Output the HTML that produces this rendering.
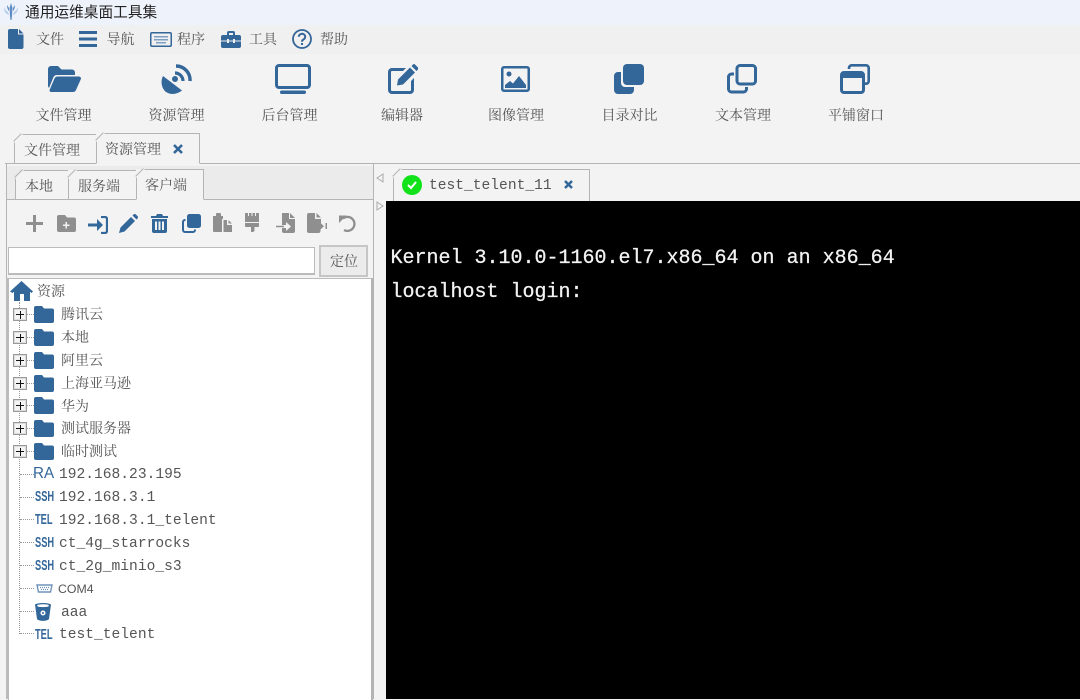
<!DOCTYPE html>
<html lang="zh"><head><meta charset="utf-8"><title>通用运维桌面工具集</title>
<style>
*{box-sizing:border-box}
html,body{margin:0;padding:0}
body{width:1080px;height:699px;overflow:hidden;position:relative;background:#f3f3f3;font-family:"Liberation Serif","Noto Serif CJK SC",serif;color:#555}
.a,.t,.m,svg{position:absolute}
.t{font-size:14px;line-height:20px;white-space:nowrap;font-family:"Noto Serif CJK SC","Liberation Serif",serif;color:#555}
.c{text-align:center;width:100px}
.m{font-family:"Liberation Mono",monospace;font-size:14.6px;line-height:20px;white-space:pre;color:#555}
svg{fill:#336699}
.tab{position:absolute;background:#f3f3f3;border:1px solid #b4b4b4}
.tab:before{content:"";position:absolute;left:-1px;top:-1px;width:9px;height:9px;background:var(--c,#f3f3f3);clip-path:polygon(0 0,100% 0,0 100%)}
.tab i{position:absolute;left:-3px;top:2px;width:11px;height:1px;background:#b4b4b4;transform:rotate(-45deg)}
.g{fill:#8f8f8f}
.dh{position:absolute;height:1px;border-top:1px dotted #999}
.dv{position:absolute;width:1px;border-left:1px dotted #999}
.pl{position:absolute;left:13px;width:14px;height:13px;border:1px solid #999;background:#f4f4f4;box-shadow:inset 0 0 0 1px #ddd}
.pl:before{content:"";position:absolute;left:2px;top:5px;width:8px;height:1px;background:#111}
.pl:after{content:"";position:absolute;left:5.500px;top:1.500px;width:1px;height:8px;background:#111}
.bl{font-family:"Liberation Sans",sans-serif;color:#336699;position:absolute;white-space:nowrap}
.sm{font:bold 15px/15px "Liberation Sans",sans-serif;transform:scaleX(.62);transform-origin:left}
.k{-webkit-text-stroke:.25px #f2f2f2}
</style></head><body>

<div class="a" style="left:0;top:0;width:1080px;height:25px;background:#eef3fb"></div>
<svg style="left:4px;top:3px" width="14" height="17" viewBox="0 0 14 17"><path fill="#b7cdea" d="M0 4c0 5 2 7 5 8l-1-3C2 8 1 6 0 4zM14 4c0 5-2 7-5 8l1-3c2-1 3-3 4-5z"/><path fill="#5f8cc4" d="M7 0l1.500 5L8 13l-.5 4h-1L6 13l-.5-8zM3 2c0 3 1 5 2 6V5zM11 2c0 3-1 5-2 6V5z"/></svg>
<div class="t" style="left:25px;top:2px;color:#222;font-family:'Noto Sans CJK SC',sans-serif;font-size:14.700px">通用运维桌面工具集</div>

<div class="a" style="left:0;top:25px;width:1080px;height:29px;background:#f0f0f0"></div>
<svg style="left:8px;top:29px" width="16" height="20" viewBox="0 0 16 20"><path d="M2 0h8v5.500h5.500V18a2 2 0 0 1-2 2H2a2 2 0 0 1-2-2V2a2 2 0 0 1 2-2zM11 0l4.500 4.500H11z"/></svg>
<div class="t" style="left:36px;top:29px">文件</div>
<svg style="left:79px;top:31px" width="18" height="16" viewBox="0 0 18 16"><path d="M0 0h18v3H0zM0 6.500h18v3H0zM0 13h18v3H0z"/></svg>
<div class="t" style="left:106.500px;top:29px">导航</div>
<svg style="left:150px;top:32px" width="22" height="15" viewBox="0 0 22 15"><path fill-rule="evenodd" d="M2 0h18a2 2 0 0 1 2 2v11a2 2 0 0 1-2 2H2a2 2 0 0 1-2-2V2a2 2 0 0 1 2-2zm0 1.500a.5.500 0 0 0-.5.500v11a.5.500 0 0 0 .5.500h18a.5.500 0 0 0 .5-.5V2a.5.500 0 0 0-.5-.5z"/><path fill="#7d9fc2" d="M4 4h14v1.500H4zM4 7h14v1.500H4zM6 10h10v1.500H6z"/></svg>
<div class="t" style="left:177px;top:29px">程序</div>
<svg style="left:221px;top:31px" width="20" height="17" viewBox="0 0 20 17"><path fill-rule="evenodd" d="M6 4V2a2 2 0 0 1 2-2h4a2 2 0 0 1 2 2v2h4a2 2 0 0 1 2 2v3.500h-6V8h-2v1.500H8V8H6v1.500H0V6a2 2 0 0 1 2-2zm2 0h4V2H8zM0 10.500h6V12h2v-1.500h4V12h2v-1.500h6V15a2 2 0 0 1-2 2H2a2 2 0 0 1-2-2z"/></svg>
<div class="t" style="left:249px;top:29px">工具</div>
<svg style="left:292px;top:29px" width="20" height="20" viewBox="0 0 20 20"><circle cx="10" cy="10" r="9" fill="none" stroke="#336699" stroke-width="1.800"/><path fill="none" stroke="#336699" stroke-width="2" d="M6.800 7.800a3.200 3 0 1 1 4.600 2.700c-1 .6-1.400 1-1.400 2.200"/><rect x="9" y="14" width="2" height="2"/></svg>
<div class="t" style="left:320px;top:29px">帮助</div>

<!-- big toolbar -->
<svg style="left:48px;top:66px" width="33" height="26" viewBox="0 0 33 26"><path d="M0 3a3 3 0 0 1 3-3h7l3.500 3.500H24a3 3 0 0 1 3 3V9H9a4 4 0 0 0-3.700 2.500L1 22a4 4 0 0 1-1-2z"/><path d="M9 10.500h22a2 2 0 0 1 1.800 2.800L28 24a3.500 3.500 0 0 1-3 2H3a1.500 1.500 0 0 1-1.300-2.200L6.500 12.500A3.500 3.500 0 0 1 9 10.500z"/></svg>
<div class="t c" style="left:13.500px;top:105px">文件管理</div>
<svg style="left:161px;top:64px" width="31" height="31" viewBox="0 0 31 31"><path d="M2 12c-3 6-1 13 3 16l1 .5c5 3 11 1 15-2z"/><circle cx="14" cy="15" r="3"/><path fill="none" stroke="#336699" stroke-width="3.200" d="M14 9a8 8 0 0 1 8 8"/><path fill="none" stroke="#336699" stroke-width="3.400" d="M15 2a14 14 0 0 1 14 15"/></svg>
<div class="t c" style="left:126.500px;top:105px">资源管理</div>
<svg style="left:275px;top:64px" width="36" height="30" viewBox="0 0 36 30"><path fill-rule="evenodd" d="M4 0h28a4 4 0 0 1 4 4v17a4 4 0 0 1-4 4H4a4 4 0 0 1-4-4V4a4 4 0 0 1 4-4zm0 3a1 1 0 0 0-1 1v17a1 1 0 0 0 1 1h28a1 1 0 0 0 1-1V4a1 1 0 0 0-1-1z"/><rect x="5" y="26.500" width="26" height="3.500" rx="1.700"/></svg>
<div class="t c" style="left:239.500px;top:105px">后台管理</div>
<svg style="left:388px;top:64px" width="30" height="30" viewBox="0 0 30 30"><path fill-rule="evenodd" d="M4 4h14l-3 3H4a1 1 0 0 0-1 1v18a1 1 0 0 0 1 1h18a1 1 0 0 0 1-1V17l3-3v12a4 4 0 0 1-4 4H4a4 4 0 0 1-4-4V8a4 4 0 0 1 4-4z"/><path d="M22 3.500l5 5L15 20.500l-6 1 1-6zM23.500 2l1.500-1.500a1.500 1.500 0 0 1 2 0l3 3a1.500 1.500 0 0 1 0 2L28.500 7z"/></svg>
<div class="t" style="left:381px;top:105px">编辑器</div>
<svg style="left:501px;top:66px" width="29" height="26" viewBox="0 0 29 26"><path fill-rule="evenodd" d="M3 0h23a3 3 0 0 1 3 3v20a3 3 0 0 1-3 3H3a3 3 0 0 1-3-3V3a3 3 0 0 1 3-3zm0 2.500a.5.500 0 0 0-.5.500v20a.5.500 0 0 0 .5.500h23a.5.500 0 0 0 .5-.5V3a.5.500 0 0 0-.5-.5z"/><circle cx="8" cy="8" r="2.500"/><path d="M4 22v-3l5-4 3 2.500L18 10l7 9v3z"/></svg>
<div class="t c" style="left:466px;top:105px">图像管理</div>
<svg style="left:614px;top:64px" width="30" height="30" viewBox="0 0 30 30"><rect x="9" y="0" width="21" height="21" rx="4"/><path d="M7 8v11a4 4 0 0 0 4 4h9v3a4 4 0 0 1-4 4H4a4 4 0 0 1-4-4V12a4 4 0 0 1 4-4z"/></svg>
<div class="t c" style="left:579.500px;top:105px">目录对比</div>
<svg style="left:727px;top:64px" width="30" height="30" viewBox="0 0 30 30"><rect x="10" y="1.500" width="18.500" height="18.500" rx="3" fill="none" stroke="#336699" stroke-width="3"/><path fill="none" stroke="#336699" stroke-width="3" d="M7 10H4.500a3 3 0 0 0-3 3v12a3 3 0 0 0 3 3h12a3 3 0 0 0 3-3v-2"/></svg>
<div class="t c" style="left:693px;top:105px">文本管理</div>
<svg style="left:840px;top:64px" width="30" height="30" viewBox="0 0 30 30"><path fill="none" stroke="#336699" stroke-width="2.600" d="M9 5V4a2.700 2.700 0 0 1 2.700-2.700H26A2.700 2.700 0 0 1 28.700 4v13a2.700 2.700 0 0 1-2.700 2.700h-1"/><path fill-rule="evenodd" d="M4 7h17a4 4 0 0 1 4 4v15a4 4 0 0 1-4 4H4a4 4 0 0 1-4-4V11a4 4 0 0 1 4-4zM3 14v12a1 1 0 0 0 1 1h17a1 1 0 0 0 1-1V14z"/></svg>
<div class="t c" style="left:806px;top:105px">平铺窗口</div>

<!-- main tab row -->
<div class="a" style="left:5px;top:163px;width:1075px;height:1px;background:#b4b4b4"></div>
<div class="tab" style="left:14px;top:134px;width:83px;height:30px"><i></i></div>
<div class="t" style="left:24px;top:140px">文件管理</div>
<div class="tab" style="left:96px;top:133px;width:104px;height:31px;border-bottom-color:#f3f3f3"><i></i></div>
<div class="t" style="left:105px;top:139px">资源管理</div>
<svg style="left:173px;top:144px" width="10" height="10" viewBox="0 0 10 10"><path fill="none" stroke="#336699" stroke-width="2.600" d="M1 1l8 8M9 1l-8 8"/></svg>

<!-- left panel -->
<div class="a" style="left:6px;top:164px;width:368px;height:535px;border-left:1px solid #b4b4b4;border-right:1px solid #b4b4b4;background:#f3f3f3"></div>
<div class="a" style="left:7px;top:166px;width:366px;height:34px;background:#ebebeb"></div>
<div class="a" style="left:7px;top:199px;width:366px;height:1px;background:#b4b4b4"></div>
<div class="tab" style="--c:#ebebeb;left:15px;top:170px;width:54px;height:30px"><i></i></div>
<div class="t" style="left:25px;top:176px">本地</div>
<div class="tab" style="--c:#f3f3f3;left:68px;top:170px;width:69px;height:30px"><i></i></div>
<div class="t" style="left:78px;top:176px">服务端</div>
<div class="tab" style="left:136px;top:169px;width:68px;height:31px;border-bottom-color:#f3f3f3"><i></i></div>
<div class="t" style="left:145px;top:175px">客户端</div>

<!-- small toolbar -->
<svg style="left:26px;top:215px" width="17" height="17" viewBox="0 0 17 17"><path class="g" d="M7 0h3v7h7v3h-7v7H7v-7H0V7h7z"/></svg>
<svg style="left:57px;top:215px" width="19" height="17" viewBox="0 0 19 17"><path class="g" fill-rule="evenodd" d="M2 0h6l2 2.500h7a2 2 0 0 1 2 2V15a2 2 0 0 1-2 2H2a2 2 0 0 1-2-2V2a2 2 0 0 1 2-2zm6.500 7v2.500H6V11h2.500v2.500H10V11h2.500V9.500H10V7z"/></svg>
<svg style="left:88px;top:216px" width="20" height="18" viewBox="0 0 20 18"><path d="M0 7.500h9V3l6 6-6 6v-4.500H0z"/><path fill="none" stroke="#336699" stroke-width="2.200" d="M13 1h4a2 2 0 0 1 2 2v12a2 2 0 0 1-2 2h-4"/></svg>
<svg style="left:119px;top:214px" width="19" height="19" viewBox="0 0 19 19"><path d="M12 3l4 4L5.500 17.500 0 19l1.500-5.500zM13.500 1.500l1-1a1.700 1.700 0 0 1 2.400 0l1.600 1.600a1.700 1.700 0 0 1 0 2.400l-1 1z"/></svg>
<svg style="left:151px;top:214px" width="17" height="19" viewBox="0 0 17 19"><path d="M0 2h5l1-2h5l1 2h5v2H0z"/><path fill-rule="evenodd" d="M1 5h15v12a2 2 0 0 1-2 2H3a2 2 0 0 1-2-2zm3 2.500V16h2V7.500zm3.500 0V16h2V7.500zm3.500 0V16h2V7.500z"/></svg>
<svg style="left:182px;top:214px" width="19" height="19" viewBox="0 0 19 19"><rect x="5" y="0" width="14" height="14" rx="2.500"/><path fill="none" stroke="#336699" stroke-width="2" d="M3.500 6H3a2 2 0 0 0-2 2v8a2 2 0 0 0 2 2h8a2 2 0 0 0 2-2v-.500"/></svg>
<svg style="left:213px;top:213px" width="19" height="19" viewBox="0 0 19 19"><path class="g" d="M0 3h3V1a1 1 0 0 1 1-1h3a1 1 0 0 1 1 1v2h2v3H9v13H1a1 1 0 0 1-1-1zM10.500 7H14v5h5v7h-8.500zM15.500 7L19 10.500h-3.500z"/></svg>
<svg style="left:245px;top:213px" width="14" height="19" viewBox="0 0 14 19"><path class="g" d="M0 0h3v3h1V0h2.500v3h1V0H10v3h1V0h3v9H0zM0 10h14v3a1 1 0 0 1-1 1H9.500v4l-1.500 1H6v-5H1a1 1 0 0 1-1-1z"/></svg>
<svg style="left:276px;top:213px" width="19" height="20" viewBox="0 0 19 20"><path class="g" d="M6 0h7v6h6v12a2 2 0 0 1-2 2H8a2 2 0 0 1-2-2v-3h4v3l5-4.500L10 9v3H6zM14 0l5 5h-5zM0 12.800h8v1.400H0z"/></svg>
<svg style="left:307px;top:213px" width="20" height="20" viewBox="0 0 20 20"><path class="g" d="M0 2a2 2 0 0 1 2-2h6v6h6v4.500h-2V8.500l5 4.800-5 4.500V15h1.500v3a2 2 0 0 1-2 2H2a2 2 0 0 1-2-2zM9.500 0l4.500 4.500H9.500zM7 12.500h9v1.500H7zM18.500 10h1.500v6h-1.500z"/></svg>
<svg style="left:339px;top:215px" width="17" height="17" viewBox="0 0 17 17"><path fill="none" stroke="#8f8f8f" stroke-width="2.300" d="M4 3.500A7 7 0 1 1 5 15"/><path class="g" d="M0 0.500h7.500L0 8z"/></svg>

<div class="a" style="left:8px;top:247px;width:307px;height:28px;background:#fff;border:1px solid #bbb;border-bottom-width:2px"></div>
<div class="a" style="left:319px;top:245px;width:49px;height:32px;background:#ececec;border:2px solid #c6c6c6"></div>
<div class="t" style="left:330px;top:251px">定位</div>

<!-- tree -->
<div class="a" style="left:8px;top:278px;width:365px;height:422px;background:#fff;border:1px solid #bbb;border-right:2px solid #b4b4b4;border-bottom:none"></div>
<div class="a" style="left:6px;top:278px;width:3px;height:421px;background:#bbb"></div>
<svg style="left:10px;top:281px" width="23" height="20" viewBox="0 0 23 20"><path d="M11.500 0L23 10.500l-1.500 1.500-1.500-1.300V20h-6v-7H10v7H4V10.700L2.500 12 0 10.500z"/></svg>
<div class="t" style="left:37px;top:281px">资源</div>

<div class="dv" style="left:19px;top:302px;height:332px"></div>
<div class="dh" style="left:27px;top:314px;width:7px"></div>
<div class="dh" style="left:27px;top:337px;width:7px"></div>
<div class="dh" style="left:27px;top:360px;width:7px"></div>
<div class="dh" style="left:27px;top:383px;width:7px"></div>
<div class="dh" style="left:27px;top:405px;width:7px"></div>
<div class="dh" style="left:27px;top:428px;width:7px"></div>
<div class="dh" style="left:27px;top:451px;width:7px"></div>
<div class="dh" style="left:20px;top:474px;width:14px"></div>
<div class="dh" style="left:20px;top:497px;width:14px"></div>
<div class="dh" style="left:20px;top:519px;width:14px"></div>
<div class="dh" style="left:20px;top:542px;width:14px"></div>
<div class="dh" style="left:20px;top:565px;width:14px"></div>
<div class="dh" style="left:20px;top:588px;width:14px"></div>
<div class="dh" style="left:20px;top:611px;width:14px"></div>
<div class="dh" style="left:20px;top:633px;width:14px"></div>

<div class="pl" style="top:308px"></div>
<div class="pl" style="top:331px"></div>
<div class="pl" style="top:354px"></div>
<div class="pl" style="top:377px"></div>
<div class="pl" style="top:399px"></div>
<div class="pl" style="top:422px"></div>
<div class="pl" style="top:445px"></div>

<svg style="left:34px;top:305.500px" width="20" height="17" viewBox="0 0 20 17"><path d="M2 0h6l2 2.500h8a2 2 0 0 1 2 2V15a2 2 0 0 1-2 2H2a2 2 0 0 1-2-2V2a2 2 0 0 1 2-2z"/></svg>
<svg style="left:34px;top:328.500px" width="20" height="17" viewBox="0 0 20 17"><path d="M2 0h6l2 2.500h8a2 2 0 0 1 2 2V15a2 2 0 0 1-2 2H2a2 2 0 0 1-2-2V2a2 2 0 0 1 2-2z"/></svg>
<svg style="left:34px;top:351.500px" width="20" height="17" viewBox="0 0 20 17"><path d="M2 0h6l2 2.500h8a2 2 0 0 1 2 2V15a2 2 0 0 1-2 2H2a2 2 0 0 1-2-2V2a2 2 0 0 1 2-2z"/></svg>
<svg style="left:34px;top:374.500px" width="20" height="17" viewBox="0 0 20 17"><path d="M2 0h6l2 2.500h8a2 2 0 0 1 2 2V15a2 2 0 0 1-2 2H2a2 2 0 0 1-2-2V2a2 2 0 0 1 2-2z"/></svg>
<svg style="left:34px;top:397px" width="20" height="17" viewBox="0 0 20 17"><path d="M2 0h6l2 2.500h8a2 2 0 0 1 2 2V15a2 2 0 0 1-2 2H2a2 2 0 0 1-2-2V2a2 2 0 0 1 2-2z"/></svg>
<svg style="left:34px;top:420px" width="20" height="17" viewBox="0 0 20 17"><path d="M2 0h6l2 2.500h8a2 2 0 0 1 2 2V15a2 2 0 0 1-2 2H2a2 2 0 0 1-2-2V2a2 2 0 0 1 2-2z"/></svg>
<svg style="left:34px;top:443px" width="20" height="17" viewBox="0 0 20 17"><path d="M2 0h6l2 2.500h8a2 2 0 0 1 2 2V15a2 2 0 0 1-2 2H2a2 2 0 0 1-2-2V2a2 2 0 0 1 2-2z"/></svg>

<div class="t" style="left:61px;top:304px">腾讯云</div>
<div class="t" style="left:61px;top:327px">本地</div>
<div class="t" style="left:61px;top:349.500px">阿里云</div>
<div class="t" style="left:61px;top:373px">上海亚马逊</div>
<div class="t" style="left:61px;top:395.500px">华为</div>
<div class="t" style="left:61px;top:418px">测试服务器</div>
<div class="t" style="left:61px;top:441px">临时测试</div>

<div class="bl" style="left:33px;top:466px;font-size:16px;line-height:16px;transform:scaleX(.95);transform-origin:left">RA</div>
<div class="bl sm" style="left:35px;top:489px">SSH</div>
<div class="bl sm" style="left:35px;top:512px">TEL</div>
<div class="bl sm" style="left:35px;top:535px">SSH</div>
<div class="bl sm" style="left:35px;top:558px">SSH</div>
<svg style="left:36px;top:584px" width="17" height="9" viewBox="0 0 17 9"><path fill="none" stroke="#6f93b8" stroke-width="1.400" d="M1 1h15l-1.500 7h-12z"/><path stroke="#6f93b8" stroke-width="1.200" stroke-dasharray="1 1" d="M4 3.500h9M5 5.500h7"/></svg>
<svg style="left:35px;top:603px" width="16" height="18" viewBox="0 0 16 18"><path fill-rule="evenodd" d="M0 1.500C3-.5 13-.5 16 1.500L14 16c-2 2.500-10 2.500-12 0zM2.500 3.500c3 .8 8 .8 11 0l.3-1.500c-3-1-8-1-11.600 0zM8 7.500a2.500 2.500 0 1 0 0 5 2.500 2.500 0 0 0 0-5z"/><circle cx="8" cy="10" r="1"/></svg>
<div class="bl sm" style="left:35px;top:627px">TEL</div>

<div class="m" style="left:59px;top:465px">192.168.23.195</div>
<div class="m" style="left:59px;top:488px">192.168.3.1</div>
<div class="m" style="left:59px;top:511px">192.168.3.1_telent</div>
<div class="m" style="left:59px;top:534px">ct_4g_starrocks</div>
<div class="m" style="left:59px;top:557px">ct_2g_minio_s3</div>
<div class="m" style="left:58px;top:579px;font:12.300px/20px 'Liberation Sans',sans-serif">COM4</div>
<div class="m" style="left:61px;top:603px">aaa</div>
<div class="m" style="left:59px;top:625px">test_telent</div>

<!-- right tabs -->
<div class="a" style="left:374px;top:164px;width:706px;height:37px;background:#f3f3f3"></div>
<div class="tab" style="left:393px;top:169px;width:197px;height:33px;border-bottom:none"><i></i></div>
<svg style="left:376px;top:173px" width="8" height="10" viewBox="0 0 8 10"><path fill="#f3f3f3" stroke="#aaa" d="M7 1v8L1 5z"/></svg>
<svg style="left:376px;top:201px" width="8" height="10" viewBox="0 0 8 10"><path fill="#f3f3f3" stroke="#aaa" d="M1 1v8l6-4z"/></svg>
<svg style="left:402px;top:175px" width="20" height="20" viewBox="0 0 20 20"><circle cx="10" cy="10" r="10" fill="#12e21a"/><path fill="none" stroke="#fff" stroke-width="2" d="M6 10l3 3 5-6"/></svg>
<div class="m" style="left:429px;top:176px">test_telent_11</div>
<svg style="left:564px;top:180px" width="9" height="9" viewBox="0 0 9 9"><path fill="none" stroke="#336699" stroke-width="2.500" d="M1 1l7 7M8 1l-7 7"/></svg>

<!-- terminal -->
<div class="a" style="left:386px;top:201px;width:694px;height:498px;background:#000"></div>
<div class="m k" style="left:390.500px;top:247px;color:#f2f2f2;font-size:20px;line-height:24px">Kernel 3.10.0-1160.el7.x86_64 on an x86_64</div>
<div class="m k" style="left:390.500px;top:281px;color:#f2f2f2;font-size:20px;line-height:24px">localhost login:</div>
</body></html>
